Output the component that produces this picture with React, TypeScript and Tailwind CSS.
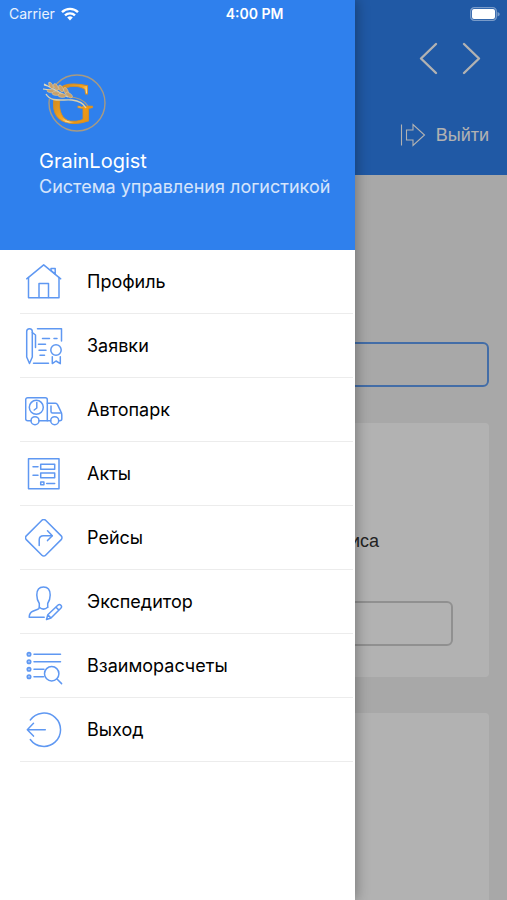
import type { ReactNode } from 'react';
import { clsx } from 'clsx';

const menuItems: { label: string; to: string; icon: ReactNode }[] = [
  { label: 'Профиль', to: '#profile', icon: <HomeIcon /> },
  { label: 'Заявки', to: '#requests', icon: <RequestsIcon /> },
  { label: 'Автопарк', to: '#fleet', icon: <TruckIcon /> },
  { label: 'Акты', to: '#acts', icon: <ActsIcon /> },
  { label: 'Рейсы', to: '#trips', icon: <TripsIcon /> },
  { label: 'Экспедитор', to: '#forwarder', icon: <ForwarderIcon /> },
  { label: 'Взаиморасчеты', to: '#settlements', icon: <SettlementsIcon /> },
  { label: 'Выход', to: '#logout', icon: <ExitIcon /> },
];

export default function App() {
  return (
    <div className="relative min-h-screen overflow-hidden bg-[#f1f1f1] font-['Inter',sans-serif]">
      <Page />

      {/* Dimmed backdrop */}
      <div className="absolute inset-0 bg-black/30" />

      <Drawer />
      <StatusBar />
    </div>
  );
}

function StatusBar() {
  return (
    <div className="absolute inset-x-0 top-0 grid h-7 grid-cols-3 items-center pl-[9px] pr-[7px] text-sm text-white">
      <span className="flex items-center gap-1.5 text-white/90">
        Carrier
        <svg width="18" height="14" viewBox="0 0 18 14" fill="none" stroke="#fff" strokeWidth="2.4">
          <path d="M1 5.2a11.4 11.4 0 0 1 16 0" />
          <path d="M4 8.4a7.2 7.2 0 0 1 10 0" />
          <path d="M9 13.4 6.2 10.5a4 4 0 0 1 5.6 0Z" fill="#fff" stroke="none" />
        </svg>
      </span>
      <span className="text-center font-semibold">4:00 PM</span>
      <svg className="justify-self-end" width="30" height="14" viewBox="0 0 30 14">
        <rect x="0.7" y="0.7" width="25.6" height="12.6" rx="3.6" fill="none" stroke="#fff" strokeOpacity="0.4" strokeWidth="1.3" />
        <rect x="2" y="2" width="23" height="10" rx="2" fill="#fff" />
        <path d="M27.500 5v4.400c1.600-.6 2.200-1.200 2.200-2.200S29.100 5.600 27.500 5Z" fill="#fff" fillOpacity="0.4" />
      </svg>
    </div>
  );
}

function Page() {
  return (
    <div className="flex flex-col">
      <header className="flex h-[175px] flex-col items-end bg-[#2f80ed] pr-[18px] pt-[42px] text-white">
        <div className="flex gap-5 pr-1.5">
          <button type="button" aria-label="Назад">
            <ChevronIcon d="M19 2 4 16.500l15 14.500" />
          </button>
          <button type="button" aria-label="Вперед">
            <ChevronIcon d="m4 2 15 14.500L4 31" />
          </button>
        </div>
        <button type="button" className="mt-12 flex items-center gap-2.5 font-['Liberation_Sans',sans-serif] text-lg leading-6">
          <svg width="26" height="24" viewBox="0 0 26 24" fill="none" stroke="currentColor" strokeWidth="1.1">
            <path d="M1.500 1.500v21M6.500 7v10h6.500v5.500L24.500 12 13 1.500V7Z" />
          </svg>
          Выйти
        </button>
      </header>

      <main className="flex flex-col px-[18px] pt-[167px]">
        <input type="text" aria-label="Поиск" className="h-[45px] rounded-md border-2 border-[#2f80ed]/75" />

        <section className="mt-9 flex h-[254px] flex-col justify-end rounded-sm bg-white px-9 pb-[31px]">
          <label htmlFor="service" className="pb-12 pr-[74px] text-right font-['Liberation_Sans',sans-serif] text-lg leading-6 text-[#333]">
            сервиса
          </label>
          <input id="service" type="text" className="h-[45px] rounded-md border-2 border-[#cfcfcf]" />
        </section>

        <section className="mt-9 h-[187px] rounded-t-sm bg-white" />
      </main>
    </div>
  );
}

function ChevronIcon({ d }: { d: string }) {
  return (
    <svg width="23" height="33" viewBox="0 0 23 33" fill="none" stroke="currentColor" strokeWidth="2.4" strokeLinecap="round" strokeLinejoin="round">
      <path d={d} />
    </svg>
  );
}

function Drawer() {
  return (
    <aside className="absolute inset-y-0 left-0 w-[70%] bg-white shadow-[2px_0_12px_rgba(0,0,0,0.3)]">
      <div className="h-[250px] bg-[#2f80ed] pl-[39px] pt-[72px] text-white">
        <Logo />
        <h1 className="mt-3 text-xl leading-7">GrainLogist</h1>
        <p className="whitespace-nowrap text-lg leading-6 text-white/80">Система управления логистикой</p>
      </div>

      <nav aria-label="Меню">
        <ul className="pl-5 pr-0.5">
          {menuItems.map((item) => (
            <li key={item.to} className="border-b border-[#ececec]">
              <a href={item.to} className="flex h-[63px] items-center gap-6 pl-[5px] text-lg text-black">
                {item.icon}
                {item.label}
              </a>
            </li>
          ))}
        </ul>
      </nav>
    </aside>
  );
}

function Logo() {
  return (
    <svg width="70" height="63" viewBox="0 0 70 63" className="overflow-visible" role="img" aria-label="GrainLogist">
      <defs>
        <linearGradient id="gold" x1="0" y1="0" x2="1" y2="1">
          <stop offset="0" stopColor="#b08a4e" />
          <stop offset="0.3" stopColor="#d98f20" />
          <stop offset="0.5" stopColor="#f5a623" />
          <stop offset="0.58" stopColor="#ffd98c" />
          <stop offset="0.66" stopColor="#f29a12" />
          <stop offset="1" stopColor="#d08a25" />
        </linearGradient>
      </defs>
      <circle cx="38" cy="31" r="28" fill="none" stroke="#a79a83" strokeWidth="1.4" />
      <text x="12" y="51" fontSize="60" fontFamily="Liberation Serif, serif" fill="url(#gold)" stroke="#d98f20" strokeWidth="0.8">G</text>

      {/* Stem and ear, outlined with the background so that they cut the letter */}
      <path d="M8 21C16 24 34 22 46 31" fill="none" stroke="#2f80ed" strokeWidth="10" />
      <path d="M7 22C12 31 24 27 33 28S45 32 47 36" fill="none" stroke="#d9cfae" strokeWidth="1.4" />
      <path d="M29 25C38 25 45 28 49 34" fill="none" stroke="#a79a83" strokeWidth="1.2" />
      <path d="M5 12 29 25M4 17l8 1M10 10l2 6M5 13l7 2" fill="none" stroke="#e7dcb8" strokeWidth="1.1" />
      <g fill="#c9a06a" stroke="#e0cfa4" strokeWidth="0.5">
        <ellipse cx="12" cy="13.500" rx="3.500" ry="1.700" transform="rotate(60 12 13.500)" />
        <ellipse cx="17" cy="15" rx="3.800" ry="1.900" transform="rotate(60 17 15)" />
        <ellipse cx="22" cy="16.500" rx="3.800" ry="2" transform="rotate(60 22 16.500)" />
        <ellipse cx="27" cy="19" rx="3.800" ry="2" transform="rotate(65 27 19)" />
        <ellipse cx="12" cy="19" rx="4" ry="1.700" transform="rotate(5 12 19)" />
        <ellipse cx="17" cy="21.500" rx="4" ry="1.900" transform="rotate(5 17 21.500)" />
        <ellipse cx="23" cy="23.500" rx="4" ry="1.900" transform="rotate(5 23 23.500)" />
        <ellipse cx="30" cy="23" rx="4" ry="1.900" transform="rotate(35 30 23)" />
      </g>
    </svg>
  );
}

function MenuIcon({ children, className }: { children: ReactNode; className?: string }) {
  return (
    <svg
      width="38"
      height="38"
      viewBox="0 0 38 38"
      fill="none"
      stroke="currentColor"
      strokeWidth="1.5"
      strokeLinecap="round"
      strokeLinejoin="round"
      className={clsx('shrink-0 text-[#5f98f2]', className)}
      aria-hidden="true"
    >
      {children}
    </svg>
  );
}

function HomeIcon() {
  return (
    <MenuIcon>
      <path d="M3.500 14.500v20.200H34V14.500" />
      <path d="M1.700 15.800 18.700 1.800l17 14" />
      <path d="M14 34.500V20.500h9.500v14" />
      <path d="M26 7.500v-2h4.200v5.500M26 7.500l4.200 3.500" />
    </MenuIcon>
  );
}

function RequestsIcon() {
  return (
    <MenuIcon>
      <path d="M1.700 4.500a2.800 2.800 0 0 1 5.600 0V30l-2.800 6.500L1.700 30Z" />
      <path d="M7.300 5.500 10.500 8v12.500" />
      <path d="M12.500 1.800h24V14" />
      <path d="M17.500 11.500h7M29 11.500h3M13.500 17.300h7M14 23.300h7M15 28.300h4.500M8.500 36.300h15" />
      <circle cx="31" cy="23" r="5.200" />
      <path d="M27.300 29.800v6.800l3.700-2.600 4.300 2.600v-6.800" />
    </MenuIcon>
  );
}

function TruckIcon() {
  return (
    <MenuIcon>
      <path d="M6 29.700H2.700a2 2 0 0 1-2-2V8.700a2 2 0 0 1 2-2h17.600a2 2 0 0 1 2 2v21H14" />
      <path d="M22.300 12.300h8.200c1 0 1.600.5 2 1.400l3.400 7c.6 1.100.9 2 .9 3.300v3.700c0 1.300-.7 2-2 2h-1.100M25.700 29.700h-3.400" />
      <path d="M26 15v5.500c0 1 .5 1.500 1.500 1.500h7.800" />
      <circle cx="11.300" cy="16.300" r="7" />
      <path d="M11.800 11.500V17l-2.600 2" />
      <circle cx="10" cy="29.700" r="4" />
      <circle cx="29.700" cy="29.700" r="4" />
    </MenuIcon>
  );
}

function ActsIcon() {
  return (
    <MenuIcon>
      <rect x="3.500" y="3.800" width="30.500" height="30" />
      <rect x="15.700" y="9.300" width="14" height="5" />
      <rect x="15.700" y="18" width="14" height="4.700" />
      <rect x="15.700" y="27" width="3.200" height="2.800" />
      <path d="M8 11.800h5M8 20.300h5M21.700 28.500h8" />
    </MenuIcon>
  );
}

function TripsIcon() {
  return (
    <MenuIcon>
      <path d="M16.900 1.300a2.600 2.600 0 0 1 3.700 0l15.600 15.600a2.600 2.600 0 0 1 0 3.700L20.600 36.200a2.600 2.600 0 0 1-3.700 0L1.300 20.600a2.600 2.600 0 0 1 0-3.700Z" />
      <path d="M14.200 26.500V21c0-3 1.700-4.300 4.300-4.300h8.700" />
      <path d="m22.500 11.800 4.800 4.900-4.800 4.900" />
    </MenuIcon>
  );
}

function ForwarderIcon() {
  return (
    <MenuIcon>
      <path d="M22.700 24.200v-3.700c1.300-2 2.500-4.800 2.500-8.500 0-5.500-2.500-8-6.700-8s-6.700 2.500-6.700 8c0 3.700 1.200 6.500 2.500 8.500v4c0 1-.7 1.500-1.500 1.800l-5 1.900c-2 .8-3.500 2.700-3.600 6h15" />
      <path d="M14.300 24.200c2.500 2.300 5.900 2.300 8.400 0" />
      <path d="m21.500 36.500 1.300-4.700 10-9.600c1-.9 2.300-.8 3.100 0 .8.900.8 2.100-.1 3L26 35Zm1.300-4.700L26 35m4.800-11 3.100 3.100" />
    </MenuIcon>
  );
}

function SettlementsIcon() {
  return (
    <MenuIcon>
      <g strokeWidth="1.7" fill="#b5cffa">
        <circle cx="4" cy="7.300" r="1.700" />
        <circle cx="4" cy="14.700" r="1.700" />
        <circle cx="4" cy="22.300" r="1.700" />
        <circle cx="4" cy="29.700" r="1.700" />
      </g>
      <path d="M9 7.300h26.500M9 14.700h26.500M9 22.300h10M9 29.700h9.500" />
      <circle cx="26.700" cy="26.700" r="7.200" />
      <path d="m32 32 4.600 4.600" />
    </MenuIcon>
  );
}

function ExitIcon() {
  return (
    <MenuIcon>
      <path d="M5.300 9a16.700 16.700 0 1 1 0 19.500" />
      <path d="M20.300 18.700H2.300M8.500 12.300l-6.200 6.400 6.200 6.400" />
    </MenuIcon>
  );
}
